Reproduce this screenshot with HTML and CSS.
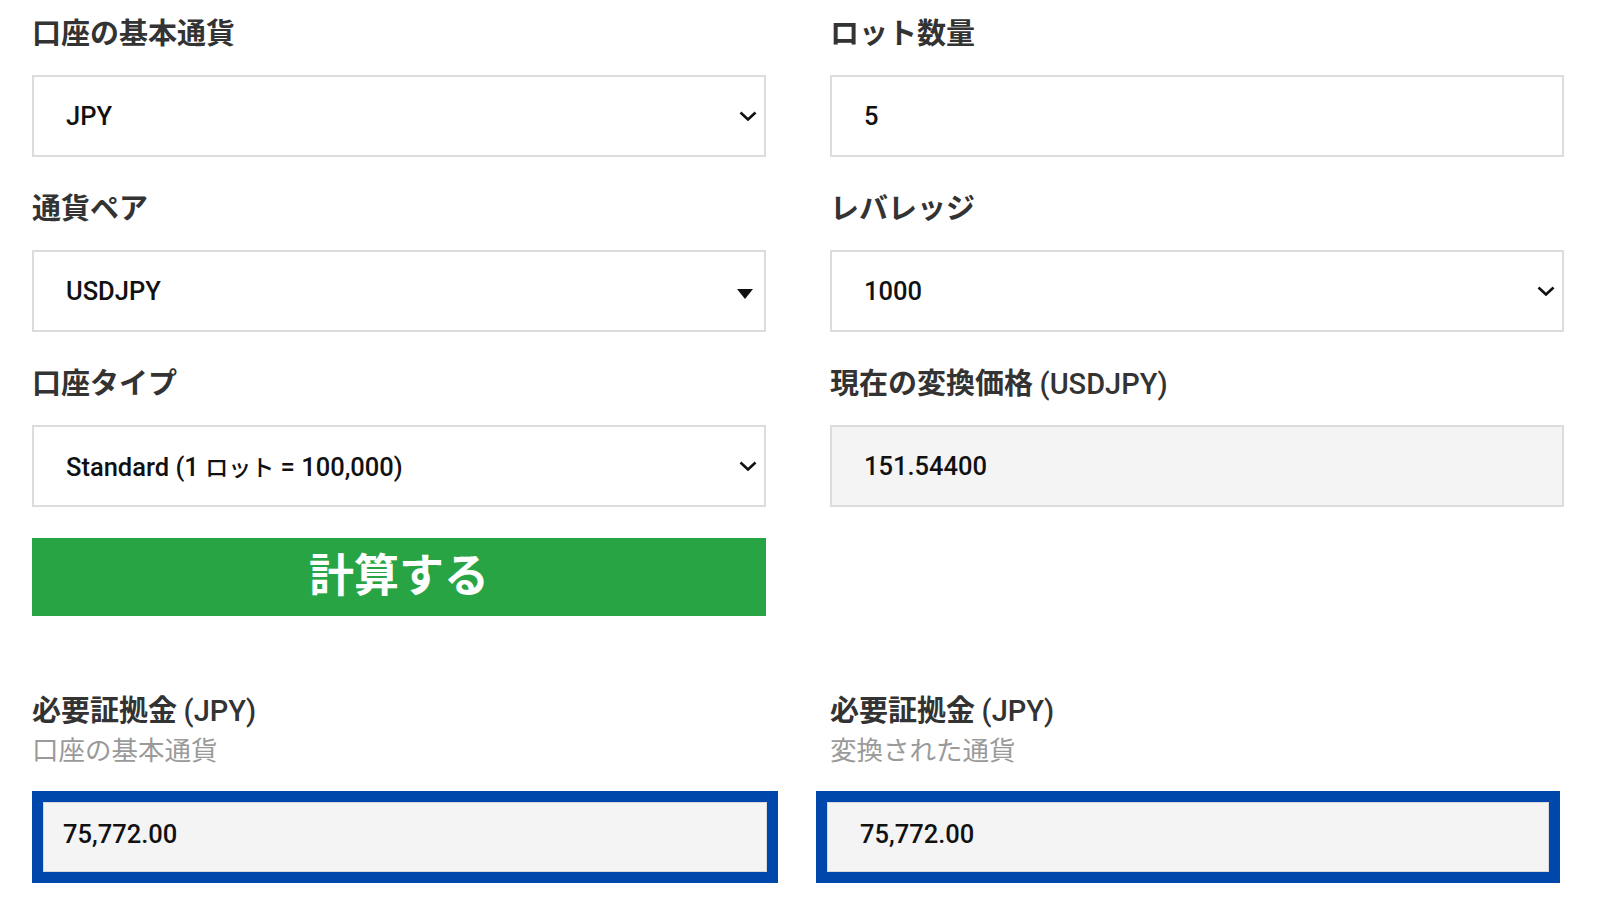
FILE: index.html
```html
<!DOCTYPE html>
<html lang="ja">
<head>
<meta charset="utf-8">
<title>証拠金計算機</title>
<link rel="stylesheet" href="styles.css">
</head>
<body>
<div class="calc">
  <div class="form">
    <div class="col">
      <div class="field">
        <div class="label">口座の基本通貨</div>
        <div class="box select">
          <span class="val">JPY</span>
          <svg class="chev" width="18" height="10" viewBox="0 0 18 10"><polyline points="1.5,1.5 9,8.5 16.5,1.5" fill="none" stroke="#111" stroke-width="2.6"/></svg>
        </div>
      </div>
      <div class="field">
        <div class="label">通貨ペア</div>
        <div class="box select">
          <span class="val">USDJPY</span>
          <svg class="tri" width="16" height="10" viewBox="0 0 16 10"><polygon points="0,0 16,0 8,10" fill="#111"/></svg>
        </div>
      </div>
      <div class="field">
        <div class="label">口座タイプ</div>
        <div class="box select">
          <span class="val">Standard (1 <span class="cjk">ロット</span> = 100,000)</span>
          <svg class="chev" width="18" height="10" viewBox="0 0 18 10"><polyline points="1.5,1.5 9,8.5 16.5,1.5" fill="none" stroke="#111" stroke-width="2.6"/></svg>
        </div>
      </div>
      <button class="calc-btn">計算する</button>
    </div>
    <div class="col">
      <div class="field">
        <div class="label">ロット数量</div>
        <div class="box">
          <span class="val">5</span>
        </div>
      </div>
      <div class="field">
        <div class="label">レバレッジ</div>
        <div class="box select">
          <span class="val">1000</span>
          <svg class="chev" width="18" height="10" viewBox="0 0 18 10"><polyline points="1.5,1.5 9,8.5 16.5,1.5" fill="none" stroke="#111" stroke-width="2.6"/></svg>
        </div>
      </div>
      <div class="field">
        <div class="label">現在の変換価格 <span class="latin">(USDJPY)</span></div>
        <div class="box readonly">
          <span class="val">151.54400</span>
        </div>
      </div>
    </div>
  </div>

  <div class="results-head">
    <div class="rhead">
      <div class="label">必要証拠金 <span class="latin">(JPY)</span></div>
      <div class="sublabel">口座の基本通貨</div>
    </div>
    <div class="rhead">
      <div class="label">必要証拠金 <span class="latin">(JPY)</span></div>
      <div class="sublabel">変換された通貨</div>
    </div>
  </div>

  <div class="results">
    <div class="result result-left">
      <div class="result-inner"><span class="val">75,772.00</span></div>
    </div>
    <div class="result result-right">
      <div class="result-inner"><span class="val">75,772.00</span></div>
    </div>
  </div>
</div>
</body>
</html>
```

FILE: styles.css
```css
* { box-sizing: border-box; }

html, body {
  margin: 0;
  padding: 0;
  background: #ffffff;
}

body {
  font-family: Roboto, "Noto Sans CJK JP", "Liberation Sans", sans-serif;
  color: #111;
}

.calc {
  padding: 11px 0 0 32px;
  width: 1600px;
}

.form {
  display: grid;
  grid-template-columns: 734px 734px;
  column-gap: 64px;
}

.col {
  display: flex;
  flex-direction: column;
}

.field {
  margin-bottom: 29px;
}

.label {
  font-family: "Noto Sans CJK JP", Roboto, sans-serif;
  font-size: 29px;
  line-height: 40px;
  height: 40px;
  font-weight: 700;
  color: #333;
  margin-bottom: 24px;
  white-space: nowrap;
}

.label .latin {
  font-family: Roboto, sans-serif;
  font-weight: 500;
}

.box {
  height: 82px;
  border: 2px solid #dcdcdc;
  background: #fff;
  display: flex;
  align-items: center;
  justify-content: space-between;
  padding: 0 7px 0 32px;
}

.box.readonly {
  background: #f4f4f4;
}

.val {
  font-family: Roboto, "Noto Sans CJK JP", sans-serif;
  font-size: 25.5px;
  font-weight: 500;
  color: #111;
}

.val .cjk {
  font-family: "Noto Sans CJK JP", sans-serif;
  font-size: 23px;
}

.box .tri {
  margin-right: 4px;
  margin-top: 6px;
}

.calc-btn {
  margin-top: 2px;
  height: 78px;
  width: 100%;
  border: none;
  background: #28a444;
  color: #fff;
  font-family: "Noto Sans CJK JP", sans-serif;
  font-size: 45px;
  font-weight: 700;
  line-height: 1;
  padding: 0 0 9px 0;
  cursor: pointer;
}

.results-head {
  margin-top: 72px;
  display: grid;
  grid-template-columns: 734px 734px;
  column-gap: 64px;
}

.rhead .label {
  margin-bottom: 0;
}

.sublabel {
  font-family: "Noto Sans CJK JP", sans-serif;
  font-size: 26.5px;
  line-height: 36px;
  padding-top: 3px;
  color: #9a9a9a;
  font-weight: 400;
}

.results {
  margin-top: 24px;
  display: grid;
  grid-template-columns: 746px 744px;
  column-gap: 38px;
}

.result {
  border: 11px solid #0047ab;
  height: 92px;
  background: #fff;
}

.result-inner {
  height: 100%;
  background: #f4f4f4;
  border: 1px solid #d8d8d8;
  display: flex;
  align-items: center;
  padding-bottom: 6px;
}

.result-left .result-inner {
  padding-left: 19px;
}

.result-right .result-inner {
  padding-left: 32px;
}
```
